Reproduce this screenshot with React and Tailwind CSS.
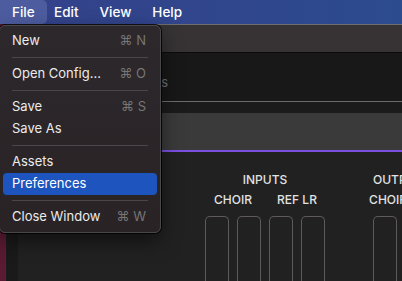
import React from 'react';

const menuItems = [
  { label: 'New', shortcut: '⌘N' },
  { sep: true },
  { label: 'Open Config...', shortcut: '⌘O' },
  { sep: true },
  { label: 'Save', shortcut: '⌘S' },
  { label: 'Save As' },
  { sep: true },
  { label: 'Assets' },
  { label: 'Preferences', active: true },
  { sep: true },
  { label: 'Close Window', shortcut: '⌘W' }
];

const Fader = () => (
  <div className="shrink-0 w-[24px] h-[80px] rounded-t-[5px] border border-b-0 border-[#5e5a5c]" />
);

const Group = ({ title, pairs }) => (
  <div className="shrink-0 flex flex-col items-stretch px-[4px]">
    <div className="text-[12px] leading-[16px] font-medium text-[#e2e2e2] text-center whitespace-nowrap">{title}</div>
    <div className="h-[2px] bg-[#3c3c3c] -mx-[4px]" />
    <div className="flex gap-[8px] mt-[4px]">
      {pairs.map(p => (
        <div key={p} className="shrink-0 w-[56px] flex flex-col items-center">
          <div className="text-[12px] leading-[16px] font-medium text-[#e2e2e2] whitespace-nowrap">{p}</div>
          <div className="flex gap-[8px] mt-[8px]">
            <Fader />
            <Fader />
          </div>
        </div>
      ))}
    </div>
  </div>
);

const App = () => {
  return (
    <div className="relative w-[402px] h-[281px] overflow-hidden bg-[#5a1a33]" style={{ fontFamily: 'Inter, "Noto Sans", sans-serif' }}>
      {/* system menu bar */}
      <div className="h-[24px] flex items-center bg-gradient-to-r from-[#34418a] to-[#2c4b8e] text-white text-[13.5px] font-medium">
        <div className="w-[47px] h-[24px] pl-[12px] flex items-center rounded-r-[5px] bg-[#4d5c9f]">File</div>
        <div className="ml-[7px] flex gap-[21px]">
          <span>Edit</span>
          <span>View</span>
          <span>Help</span>
        </div>
      </div>

      {/* app window */}
      <div className="ml-[5px] border-l border-[#3b3035] flex flex-col">
        <div className="h-[1px] bg-[#6e6e6e]" />
        <div className="h-[27px] bg-[#373335]" />
        <div className="h-[1px] bg-[#0b0b0b]" />
        <div className="h-[48px] bg-[#181818] flex items-center pt-[12px]">
          <div className="w-[162px] shrink-0 text-right text-[13px] text-[#707070]">Devices</div>
        </div>
        <div className="h-[1px] bg-[#6c6c6c]" />
        <div className="h-[11px] bg-[#1b1b1b]" />
        <div className="h-[37px] bg-[#3a3a3a]" />
        <div className="h-[2px] bg-[#7b4fe2]" />
        <div className="flex h-[140px] bg-[#212121]">
          <div className="shrink-0 w-[12px] bg-[#1a1a1a]" />
          <div className="shrink-0 flex gap-[40px] pl-[183px] pt-[20px]">
            <Group title="INPUTS" pairs={['CHOIR', 'REF LR']} />
            <Group title="OUTPUTS" pairs={['CHOIR MIX']} />
          </div>
        </div>
      </div>

      {/* File dropdown */}
      <div className="absolute left-[-1px] top-[25px] w-[162px] rounded-[6px] border border-[#4a474a] bg-gradient-to-b from-[#2c282b] to-[#2a2326] shadow-[0_0_0_1px_rgba(0,0,0,0.85),0_8px_20px_rgba(0,0,0,0.5)] px-[3px] py-[4px] text-[13px]">
        {menuItems.map((item, i) =>
          item.sep ? (
            <div key={i} className="h-[11px] flex items-center px-[9px]">
              <div className="h-[1px] w-full bg-[#4b4649]" />
            </div>
          ) : (
            <div
              key={i}
              className={`h-[22px] flex items-center justify-between pl-[9px] pr-[11px] rounded-[4px] ${item.active ? 'bg-[#1d54bd] text-white' : 'text-[#ebebeb]'}`}
            >
              <span>{item.label}</span>
              {item.shortcut && <span className="text-[#767676]">{item.shortcut.split('').join(' ')}</span>}
            </div>
          )
        )}
      </div>
    </div>
  );
};

export default App;
